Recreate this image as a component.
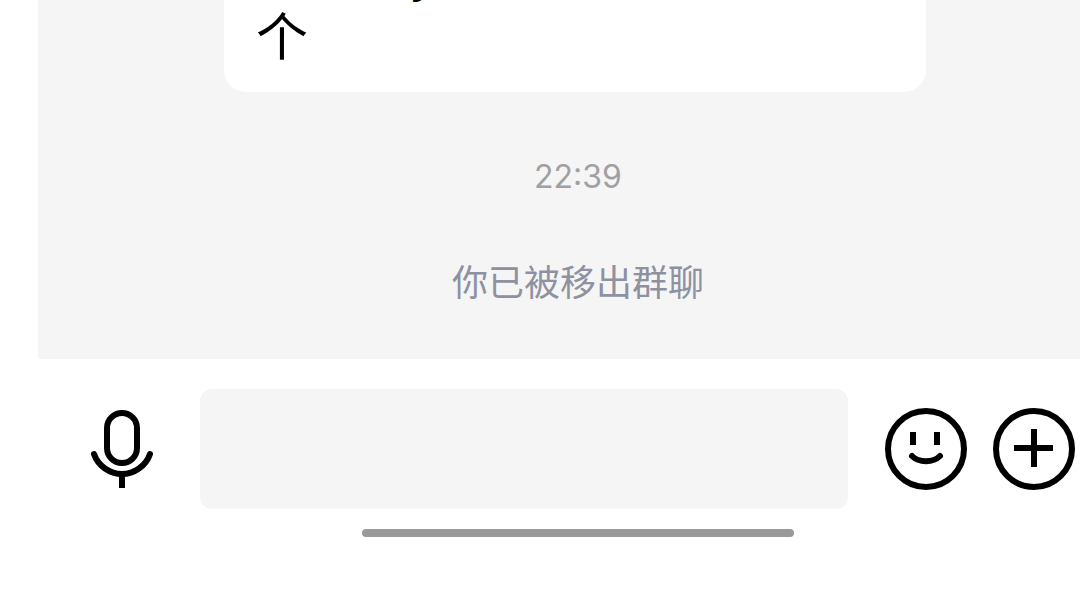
<script>
</script>

<div class="screen">
  <div class="chat">
    <div class="bubble">
      <div class="clip"><span class="cut">y</span></div>
      <div class="line">个</div>
    </div>
    <div class="time">22:39</div>
    <div class="notice">你已被移出群聊</div>
  </div>
  <div class="bar">
    <svg class="mic" width="64" height="80" viewBox="0 0 64 80" fill="none" stroke="#000" stroke-width="6">
      <rect x="17" y="3" width="30" height="50" rx="15" />
      <path d="M4 44 C8 56 20 64 32 64 C44 64 56 56 60 44" stroke-linecap="round" />
      <path d="M32 64 V78" />
    </svg>
    <div class="input"></div>
    <svg class="smile" width="82" height="82" viewBox="0 0 82 82" fill="none" stroke="#000" stroke-width="6">
      <circle cx="41" cy="41" r="38" />
      <path d="M28 24 V37 M52 24 V37" />
      <path d="M27 48 C34 55 48 55 55 48" stroke-linecap="round" />
    </svg>
    <svg class="plus" width="82" height="82" viewBox="0 0 82 82" fill="none" stroke="#000" stroke-width="6">
      <circle cx="41" cy="41" r="38" />
      <path d="M41 21 V59 M21 40 H60" />
    </svg>
  </div>
  <div class="home-row"><div class="home"></div></div>
</div>

<style>
  :global(body) {
    margin: 0;
    background: #fff;
  }
  .screen {
    width: 1080px;
    height: 606px;
    overflow: hidden;
    background: #fff;
    font-family: "Noto Sans CJK SC", sans-serif;
  }
  .chat {
    width: 1080px;
    height: 359px;
    margin-left: 38px;
    background: #f5f5f5;
    display: flex;
    flex-direction: column;
    box-sizing: border-box;
  }
  .bubble {
    width: 702px;
    height: 92px;
    margin-left: 186px;
    background: #fff;
    border-radius: 0 0 22px 22px;
    padding-left: 34px;
    box-sizing: border-box;
    flex: none;
  }
  .clip {
    height: 4px;
    overflow: hidden;
    display: flex;
    align-items: flex-end;
  }
  .cut {
    font-size: 48px;
    line-height: 48px;
    margin-left: 153px;
    margin-bottom: 10px;
    color: #000;
  }
  .line {
    font-size: 52px;
    line-height: 60px;
    font-weight: 400;
    color: #000;
    margin-left: -2px;
  }
  .time {
    margin-top: 65px;
    text-align: center;
    font-family: "Inter", "Liberation Sans", sans-serif;
    font-size: 32px;
    line-height: 40px;
    color: #a0a0a3;
  }
  .notice {
    margin-top: 62px;
    text-align: center;
    font-size: 36px;
    line-height: 42px;
    color: #8e919f;
  }
  .bar {
    height: 150px;
    display: flex;
    align-items: flex-start;
    padding-top: 30px;
    box-sizing: border-box;
  }
  .mic {
    margin: 21px 46px 0 90px;
    flex: none;
  }
  .input {
    width: 648px;
    height: 120px;
    background: #f5f5f5;
    border-radius: 12px;
    flex: none;
  }
  .smile {
    margin: 19px 0 0 37px;
    flex: none;
  }
  .plus {
    margin: 19px 0 0 26px;
    flex: none;
  }
  .home-row {
    width: 1080px;
    margin: 20px 0 0 38px;
    display: flex;
    justify-content: center;
  }
  .home {
    width: 432px;
    height: 8px;
    border-radius: 4px;
    background: #999;
  }
</style>
